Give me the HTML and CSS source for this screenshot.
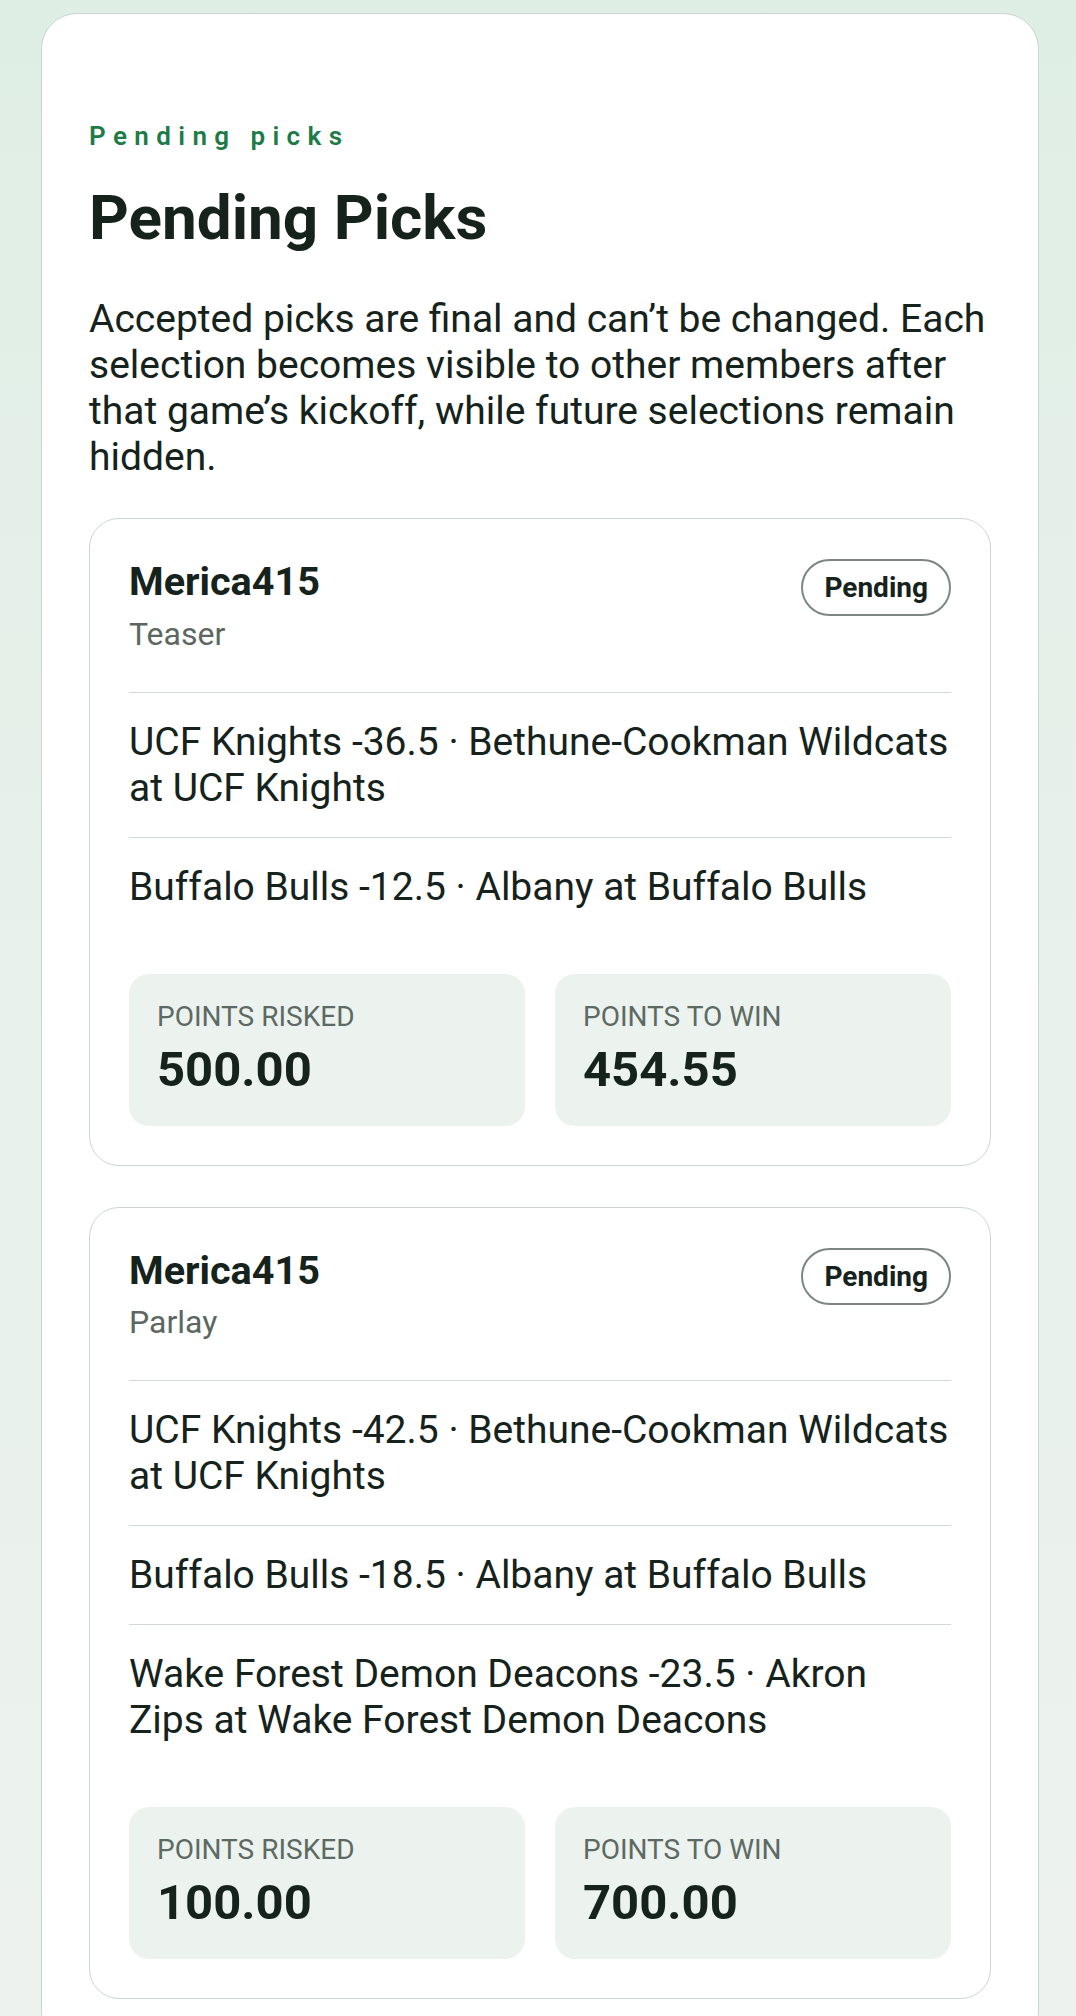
FILE: index.html
```html
<!DOCTYPE html>
<html lang="en">
<head>
<meta charset="utf-8">
<title>Pending Picks</title>
<link rel="stylesheet" href="styles.css">
</head>
<body>
<main class="panel">
  <p class="eyebrow">Pending picks</p>
  <h1 class="title">Pending Picks</h1>
  <p class="intro">Accepted picks are final and can’t be changed. Each selection becomes visible to other members after that game’s kickoff, while future selections remain hidden.</p>

  <section class="ticket">
    <header class="ticket-head">
      <div class="who">
        <div class="name">Merica415</div>
        <div class="kind">Teaser</div>
      </div>
      <span class="badge">Pending</span>
    </header>
    <ul class="legs">
      <li class="leg">UCF Knights -36.5 · Bethune-Cookman Wildcats at UCF Knights</li>
      <li class="leg">Buffalo Bulls -12.5 · Albany at Buffalo Bulls</li>
    </ul>
    <div class="stats">
      <div class="stat">
        <div class="stat-label">POINTS RISKED</div>
        <div class="stat-value">500.00</div>
      </div>
      <div class="stat">
        <div class="stat-label">POINTS TO WIN</div>
        <div class="stat-value">454.55</div>
      </div>
    </div>
  </section>

  <section class="ticket">
    <header class="ticket-head">
      <div class="who">
        <div class="name">Merica415</div>
        <div class="kind">Parlay</div>
      </div>
      <span class="badge">Pending</span>
    </header>
    <ul class="legs">
      <li class="leg">UCF Knights -42.5 · Bethune-Cookman Wildcats at UCF Knights</li>
      <li class="leg">Buffalo Bulls -18.5 · Albany at Buffalo Bulls</li>
      <li class="leg">Wake Forest Demon Deacons -23.5 · Akron Zips at Wake Forest Demon Deacons</li>
    </ul>
    <div class="stats">
      <div class="stat">
        <div class="stat-label">POINTS RISKED</div>
        <div class="stat-value">100.00</div>
      </div>
      <div class="stat">
        <div class="stat-label">POINTS TO WIN</div>
        <div class="stat-value">700.00</div>
      </div>
    </div>
  </section>
</main>
</body>
</html>
```

FILE: styles.css
```css
html, body {
  margin: 0;
  padding: 0;
}

body {
  min-height: 100vh;
  background: linear-gradient(180deg, #dfeee5 0%, #e8f1eb 50%, #edf2ee 100%);
  font-family: Roboto, "Noto Sans", "Liberation Sans", sans-serif;
  color: #16221c;
  padding: 13px 37px 0 41px;
  box-sizing: border-box;
}

.panel {
  display: block;
  background: #ffffff;
  border: 1px solid #c8d6ce;
  border-radius: 36px;
  padding: 107px 47px 48px 47px;
  box-sizing: border-box;
  width: 998px;
}

.eyebrow {
  margin: 0;
  font-size: 26px;
  line-height: 30px;
  font-weight: 600;
  letter-spacing: 7.4px;
  color: #1e7b48;
}

.title {
  margin: 31px 0 0 0;
  font-size: 62px;
  line-height: 72px;
  font-weight: 700;
  color: #16221c;
}

.intro {
  margin: 42px 0 0 0;
  font-size: 39px;
  line-height: 46px;
  font-weight: 400;
  color: #16221c;
}

.ticket {
  margin-top: 38px;
  border: 1.5px solid #ccd6d1;
  border-radius: 30px;
  padding: 39px 39px 39px 39px;
}

.ticket + .ticket {
  margin-top: 41px;
}

.ticket-head {
  display: flex;
  justify-content: space-between;
  align-items: flex-start;
  padding-bottom: 35px;
}

.name {
  font-size: 39.6px;
  line-height: 47.5px;
  font-weight: 700;
  color: #16221c;
}

.kind {
  margin-top: 6px;
  font-size: 32px;
  line-height: 45px;
  color: #5b6760;
}

.badge {
  margin-top: 1px;
  border: 2px solid #7c8782;
  border-radius: 999px;
  padding: 10px 21px;
  font-size: 28px;
  line-height: 33px;
  font-weight: 700;
  color: #16221c;
}

.legs {
  list-style: none;
  margin: 0;
  padding: 0;
}

.leg {
  border-top: 1.5px solid #d0d9d4;
  padding: 26px 0;
  font-size: 39px;
  line-height: 46px;
  color: #16221c;
}

.stats {
  margin-top: 38px;
  display: grid;
  grid-template-columns: 1fr 1fr;
  gap: 30px;
}

.stat {
  background: #ecf2ee;
  border-radius: 20px;
  padding: 25px 28px 27px 28px;
}

.stat-label {
  font-size: 28px;
  line-height: 36px;
  color: #5d6a63;
}

.stat-value {
  margin-top: 5px;
  font-size: 49px;
  line-height: 59px;
  font-weight: 700;
  color: #16221c;
}
```
